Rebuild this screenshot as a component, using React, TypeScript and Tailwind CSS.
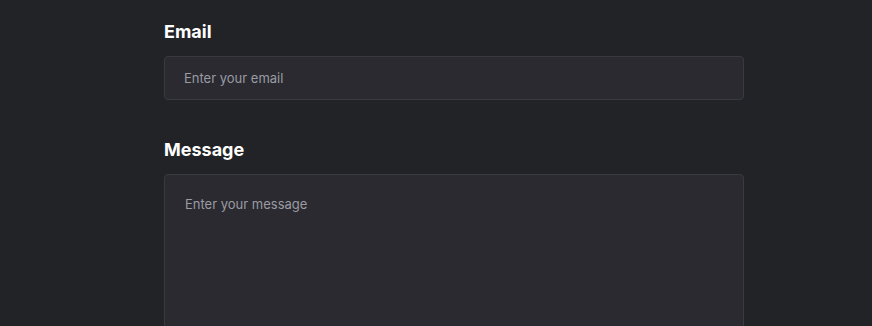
export default function App() {
  return (
    <div
      className="min-h-[326px] h-[326px] overflow-hidden bg-[#222326] pt-[18px]"
      style={{ fontFamily: 'Inter, "Noto Sans", sans-serif' }}
    >
      <div className="ml-[164px] w-[580px] flex flex-col">
        <label className="text-[18px] leading-[28px] font-bold text-white mb-[10px]">Email</label>
        <input
          type="email"
          placeholder="Enter your email"
          className="h-[44px] w-full rounded-[4px] border border-[#393940] bg-[#2a2a30] px-[19px] text-[13px] text-white placeholder:text-[#9b9ba3] outline-none"
        />
        <label className="mt-[36px] text-[18px] leading-[28px] font-bold text-white mb-[10px]">Message</label>
        <textarea
          placeholder="Enter your message"
          className="h-[180px] w-full resize-none rounded-[4px] border border-[#393940] bg-[#2a2a30] px-[20px] pt-[19px] text-[13px] leading-[20px] text-white placeholder:text-[#9b9ba3] outline-none"
        />
      </div>
    </div>
  );
}
